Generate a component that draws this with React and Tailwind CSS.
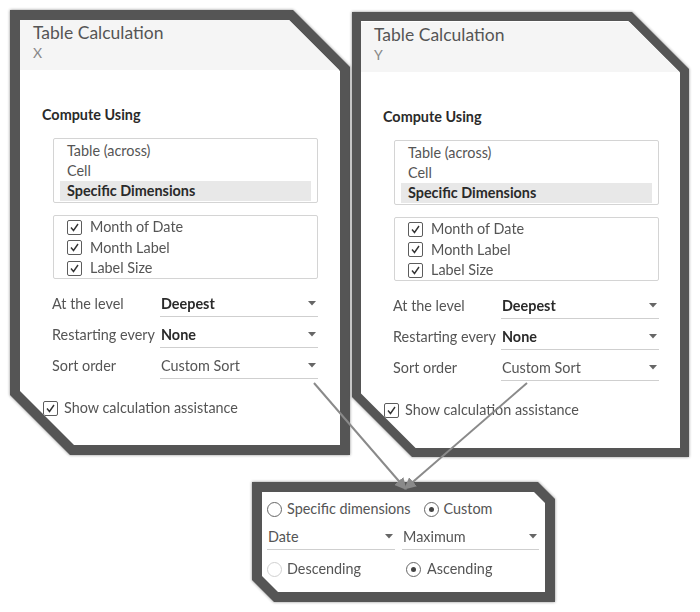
import React from "react";

const Check = () => (
  <span className="flex h-[15px] w-[15px] shrink-0 items-center justify-center rounded-[2px] border border-[#5c5c5c] bg-white">
    <svg width="11" height="11" viewBox="0 0 11 11">
      <polyline points="2,5.5 4.5,8.5 9,2" fill="none" stroke="#333" strokeWidth="1.4" />
    </svg>
  </span>
);

const Radio = ({ on, disabled }) => (
  <span
    className={
      "flex h-[15px] w-[15px] shrink-0 items-center justify-center rounded-full border bg-white " +
      (disabled ? "border-[#d0d0d0]" : "border-[#666]")
    }
  >
    {on && <span className="h-[5px] w-[5px] rounded-full bg-[#444]" />}
  </span>
);

const Caret = () => (
  <svg width="8" height="5" viewBox="0 0 8 5" className="shrink-0">
    <polygon points="0,0 8,0 4,4.5" fill="#666" />
  </svg>
);

const Dropdown = ({ value, bold, width }) => (
  <div
    className="flex h-[26px] items-center justify-between border-b border-[#cfcfcf] pr-[2px] pl-[1px]"
    style={{ width }}
  >
    <span className={bold ? "font-bold text-[#2a2a2a]" : "text-[#555]"}>{value}</span>
    <Caret />
  </div>
);

// frame with clipped top-right and bottom-left corners
const Frame = ({ w, h, b, tr, bl, className, children }) => {
  const iw = w - 2 * b;
  const ih = h - 2 * b;
  const itr = tr - b * 0.6;
  const ibl = bl - b * 0.6;
  const outer = `polygon(0 0, ${w - tr}px 0, ${w}px ${tr}px, ${w}px ${h}px, ${bl}px ${h}px, 0 ${h - bl}px)`;
  const inner = `polygon(0 0, ${iw - itr}px 0, ${iw}px ${itr}px, ${iw}px ${ih}px, ${ibl}px ${ih}px, 0 ${ih - ibl}px)`;
  return (
    <div className={"shrink-0 drop-shadow-[0_0_1.5px_rgba(0,0,0,0.45)] " + (className || "")}>
      <div className="bg-[#555]" style={{ width: w, height: h, padding: b, clipPath: outer }}>
        <div className="relative bg-white" style={{ width: iw, height: ih, clipPath: inner }}>
          {children}
        </div>
      </div>
    </div>
  );
};

const rows = [
  { label: "At the level", value: "Deepest", bold: true },
  { label: "Restarting every", value: "None", bold: true },
  { label: "Sort order", value: "Custom Sort", bold: false },
];

const CalcPanel = ({ axis }) => (
  <div className="flex flex-col text-[14.4px] text-[#555]">
    <div className="flex h-[50px] flex-col bg-[#f5f5f5] pt-[2px] pl-[13px]">
      <span className="text-[17.5px] leading-[22px] text-[#555]">Table Calculation</span>
      <span className="text-[14px] leading-[17px] text-[#888]">{axis}</span>
    </div>
    <div className="mt-[35px] pl-[22px] leading-[20px] font-bold text-[#2a2a2a]">Compute Using</div>
    <div className="mt-[13px] ml-[33px] flex h-[65px] w-[265px] flex-col rounded-[2px] border border-[#d4d4d4] px-[6px] pt-[2px]">
      <div className="h-[20px] pl-[7px] leading-[20px]">Table (across)</div>
      <div className="h-[20px] pl-[7px] leading-[20px]">Cell</div>
      <div className="h-[20px] bg-[#e8e8e8] pl-[7px] leading-[20px] font-bold text-[#2a2a2a]">Specific Dimensions</div>
    </div>
    <div className="mt-[12px] ml-[33px] flex h-[64px] w-[265px] flex-col rounded-[2px] border border-[#d4d4d4] pt-[1px] pl-[13px]">
      {["Month of Date", "Month Label", "Label Size"].map((t) => (
        <div key={t} className="flex h-[20.5px] items-center gap-[8px]">
          <Check />
          <span>{t}</span>
        </div>
      ))}
    </div>
    <div className="mt-[12px] flex flex-col gap-[5px] pl-[32px]">
      {rows.map((r) => (
        <div key={r.label} className="flex items-center">
          <span className="w-[108px] shrink-0">{r.label}</span>
          <Dropdown value={r.value} bold={r.bold} width={158} />
        </div>
      ))}
    </div>
    <div className="mt-[19px] flex h-[20px] items-center gap-[6px] pl-[23px]">
      <Check />
      <span>Show calculation assistance</span>
    </div>
  </div>
);

export default function App() {
  return (
    <div
      className="relative h-[612px] w-[700px] overflow-hidden bg-white"
      style={{ fontFamily: "Lato, 'Open Sans', sans-serif" }}
    >
      <div className="flex items-start gap-[2px] pt-[10px] pl-[10px]">
        <Frame w={340} h={445} b={10} tr={57} bl={60}>
          <CalcPanel axis="X" />
        </Frame>
        <Frame w={337} h={445} b={9} tr={57} bl={60} className="mt-[2px]">
          <div className="pt-[1px]">
            <CalcPanel axis="Y" />
          </div>
        </Frame>
      </div>

      <Frame w={303} h={120} b={10} tr={17} bl={22} className="mt-[25px] ml-[252px]">
        <div className="flex flex-col pt-[8px] pl-[5px] text-[14.4px] text-[#555]">
          <div className="flex h-[18px] items-center">
            <Radio />
            <span className="ml-[5px]">Specific dimensions</span>
            <span className="ml-[13px]">
              <Radio on />
            </span>
            <span className="ml-[5px]">Custom</span>
          </div>
          <div className="mt-[6px] flex items-center gap-[7px]">
            <Dropdown value="Date" width={128} />
            <Dropdown value="Maximum" width={137} />
          </div>
          <div className="mt-[10px] flex h-[18px] items-center">
            <Radio disabled />
            <span className="ml-[5px] w-[119px]">Descending</span>
            <Radio on />
            <span className="ml-[6px]">Ascending</span>
          </div>
        </div>
      </Frame>

      <svg className="pointer-events-none absolute inset-0" width="700" height="612">
        <defs>
          <marker id="tip" markerWidth="6" markerHeight="6" refX="4" refY="3" orient="auto">
            <polygon points="0,0 6,3 0,6" fill="#8a8a8a" />
          </marker>
        </defs>
        <line x1="314" y1="383" x2="404" y2="487" stroke="#8a8a8a" strokeWidth="2" markerEnd="url(#tip)" />
        <line x1="527" y1="383" x2="407" y2="487" stroke="#8a8a8a" strokeWidth="2" markerEnd="url(#tip)" />
      </svg>
    </div>
  );
}
